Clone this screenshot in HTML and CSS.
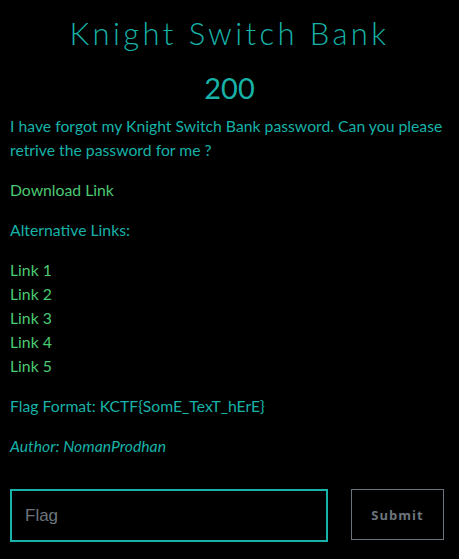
FILE: index.html
```html
<!DOCTYPE html>
<html>
<head>
<meta charset="utf-8">
<link rel="stylesheet" href="styles.css">
</head>
<body>
<main class="challenge">
  <h1 class="title">Knight Switch Bank</h1>
  <h2 class="points">200</h2>
  <div class="desc">
    <p>I have forgot my Knight Switch Bank password. Can you please retrive the password for me ?</p>
    <p><a class="link" href="#">Download Link</a></p>
    <p>Alternative Links:</p>
    <p class="links">
      <a class="link" href="#">Link 1</a><br>
      <a class="link" href="#">Link 2</a><br>
      <a class="link" href="#">Link 3</a><br>
      <a class="link" href="#">Link 4</a><br>
      <a class="link" href="#">Link 5</a>
    </p>
    <p>Flag Format: KCTF{SomE_TexT_hErE}</p>
    <p class="author">Author: NomanProdhan</p>
  </div>
  <form class="submit-row">
    <input class="flag-input" type="text" placeholder="Flag">
    <button class="submit-btn" type="button">Submit</button>
  </form>
</main>
</body>
</html>
```
FILE: styles.css
```css
html, body {
  margin: 0;
  padding: 0;
  background: #000;
}
body {
  font-family: "Lato", "Liberation Sans", sans-serif;
  color: #17b2a8;
}
.challenge {
  padding: 0 10px;
}
.title {
  margin: 0;
  padding-top: 13px;
  text-align: center;
  font-family: "Lato", sans-serif;
  font-weight: 300;
  font-size: 31px;
  line-height: 40px;
  letter-spacing: 3.4px;
  color: #17b2a8;
}
.points {
  margin: 17px 0 0;
  text-align: center;
  font-weight: 400;
  font-size: 29px;
  line-height: 36px;
  color: #17b2a8;
}
.desc {
  margin-top: 8px;
  font-size: 15.75px;
  line-height: 24px;
}
.desc p {
  margin: 0 0 16px;
}
.link {
  color: #4cc972;
  text-decoration: none;
}
.author {
  font-style: italic;
}
.submit-row {
  display: flex;
  align-items: flex-start;
  gap: 23px;
  margin-top: 31px;
}
.flag-input {
  box-sizing: border-box;
  width: 318px;
  height: 53px;
  border: 2px solid #17b2a8;
  background: #000;
  padding: 0 13px;
  font-family: "Liberation Sans", Arial, sans-serif;
  font-size: 17px;
  color: #ccc;
  outline: none;
}
.flag-input::placeholder {
  color: #6c757d;
}
.submit-btn {
  box-sizing: border-box;
  width: 93px;
  height: 51px;
  border: 1px solid #6c757d;
  background: #000;
  color: #6c757d;
  font-family: "Open Sans", sans-serif;
  font-weight: 700;
  font-size: 13px;
  letter-spacing: 1px;
}
```
